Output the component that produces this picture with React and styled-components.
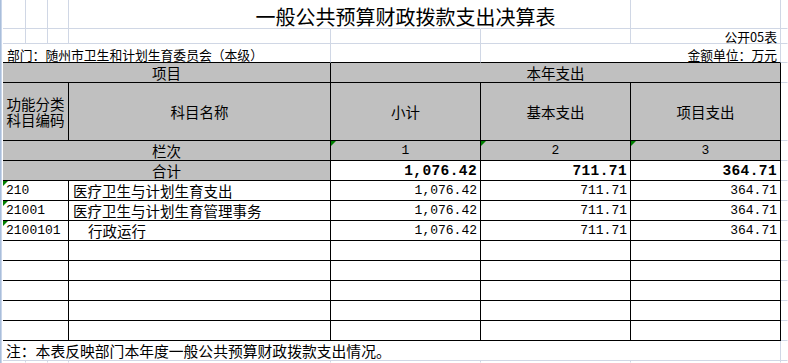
import React from 'react'
import styled, { createGlobalStyle, css } from 'styled-components'

const GRID = '#d0d7e5'

const line = (v) => (v === 'k' ? '#000' : v === 'g' ? GRID : 'transparent')

const Global = createGlobalStyle`
  html, body { margin: 0; padding: 0; background: #fff; }
  body { font-family: "Noto Sans CJK SC", sans-serif; color: #000; }
`

const Sheet = styled.div`
  display: grid;
  grid-template-columns: 3px 23px 22px 21px 262px 150px 150px 150px 1fr;
  grid-template-rows: 29px 15px 19px 20px 58px repeat(11, 20px) 1fr;
  width: 788px;
  height: 363px;
  overflow: hidden;
  background: #fff;
  font-family: "Noto Sans CJK SC", sans-serif;
  font-size: 14.5px;
  color: #000;
`

const Edge = styled.div`
  grid-column: 1;
  grid-row: 1 / -1;
  background: linear-gradient(to right, #a9bedb 0 1px, #c9d6ea 1px 2px, #fff 2px 3px);
`

const Cell = styled.div`
  position: relative;
  grid-column: span ${(p) => p.$span || 1};
  display: flex;
  align-items: center;
  justify-content: ${(p) =>
    p.$align === 'left' ? 'flex-start' : p.$align === 'right' ? 'flex-end' : 'center'};
  padding-left: ${(p) => (p.$align === 'left' ? `${p.$indent ?? 4}px` : '0')};
  padding-right: ${(p) => (p.$align === 'right' ? '3px' : '0')};
  padding-top: ${(p) => p.$top || 0}px;
  border-right: 1px solid ${(p) => line(p.$r)};
  border-bottom: 1px solid ${(p) => line(p.$b)};
  background: ${(p) => (p.$fill ? '#c0c0c0' : 'transparent')};
  white-space: nowrap;
  min-width: 0;
  line-height: ${(p) => p.$lh || 16}px;
  font-size: ${(p) => p.$size || 14.5}px;

  ${(p) =>
    p.$num &&
    css`
      font-family: "Liberation Mono", "Noto Sans CJK SC", monospace;
      font-size: ${p.$size || 13}px;
    `}

  ${(p) =>
    p.$bold &&
    css`
      font-weight: bold;
      font-size: 14.5px;
      letter-spacing: 0.4px;
    `}

  ${(p) =>
    p.$flag &&
    css`
      &::before {
        content: '';
        position: absolute;
        left: 0;
        top: 0;
        border-top: 5px solid #008000;
        border-right: 5px solid transparent;
      }
    `}
`

const Title = styled(Cell)`
  font-size: 20px;
  line-height: 22px;
  padding-top: 5px;
`

const Stack = styled.span`
  display: block;
  text-align: center;
  line-height: 16px;
`

const rows = [
  { code: '210', name: '医疗卫生与计划生育支出', indent: 4 },
  { code: '21001', name: '医疗卫生与计划生育管理事务', indent: 4 },
  { code: '2100101', name: '行政运行', indent: 19 },
]

const amounts = ['1,076.42', '711.71', '364.71']

export default function App() {
  return (
    <>
      <Global />
      <Sheet>
        <Edge />

        {/* title row */}
        <Cell $r="g" $b="g" />
        <Cell $r="g" $b="g" />
        <Cell $r="g" $b="g" />
        <Cell $b="g" />
        <Title $b="g">一般公共预算财政拨款支出决算表</Title>
        <Cell $r="g" $b="g" />
        <Cell $r="g" $b="g" />
        <Cell $b="g" />

        {/* form number */}
        <Cell $r="g" $b="g" />
        <Cell $r="g" $b="g" />
        <Cell $r="g" $b="g" />
        <Cell $r="g" $b="g" />
        <Cell $r="g" $b="g" />
        <Cell $r="g" $b="g" />
        <Cell $r="g" $b="g" $align="right" $size={12.8} $lh={13}>公开05表</Cell>
        <Cell $b="g" />

        {/* department / unit */}
        <Cell $span={4} $r="g" $b="k" $align="left" $size={12.8} $lh={14} $top={3}>
          部门：随州市卫生和计划生育委员会（本级）
        </Cell>
        <Cell $r="g" $b="k" />
        <Cell $span={2} $r="g" $b="k" $align="right" $size={12.8} $lh={14} $top={3}>
          金额单位：万元
        </Cell>
        <Cell $b="g" />

        {/* header 1 */}
        <Cell $span={4} $r="k" $b="k" $fill>项目</Cell>
        <Cell $span={3} $r="k" $b="k" $fill>本年支出</Cell>
        <Cell $b="g" />

        {/* header 2 */}
        <Cell $span={3} $r="k" $b="k" $fill>
          <Stack>功能分类<br />科目编码</Stack>
        </Cell>
        <Cell $r="k" $b="k" $fill>科目名称</Cell>
        <Cell $r="k" $b="k" $fill>小计</Cell>
        <Cell $r="k" $b="k" $fill>基本支出</Cell>
        <Cell $r="k" $b="k" $fill>项目支出</Cell>
        <Cell $b="g" />

        {/* column index */}
        <Cell $span={4} $r="k" $b="k" $fill>栏次</Cell>
        {['1', '2', '3'].map((n) => (
          <Cell key={n} $r="k" $b="k" $fill $flag $num>{n}</Cell>
        ))}
        <Cell $b="g" />

        {/* total */}
        <Cell $span={4} $r="k" $b="k" $fill>合计</Cell>
        {amounts.map((a) => (
          <Cell key={a} $r="k" $b="k" $align="right" $num $bold>{a}</Cell>
        ))}
        <Cell $b="g" />

        {rows.map((r) => (
          <React.Fragment key={r.code}>
            <Cell $span={3} $r="k" $b="k" $align="left" $indent={3} $flag $num>{r.code}</Cell>
            <Cell $r="k" $b="k" $align="left" $indent={r.indent}>{r.name}</Cell>
            {amounts.map((a) => (
              <Cell key={a} $r="k" $b="k" $align="right" $num>{a}</Cell>
            ))}
            <Cell $b="g" />
          </React.Fragment>
        ))}

        {[0, 1, 2, 3, 4].map((i) => (
          <React.Fragment key={i}>
            <Cell $span={3} $r="k" $b="k" />
            <Cell $r="k" $b="k" />
            <Cell $r="k" $b="k" />
            <Cell $r="k" $b="k" />
            <Cell $r="k" $b="k" />
            <Cell $b="g" />
          </React.Fragment>
        ))}

        {/* note */}
        <Cell $span={7} $r="g" $b="g" $align="left" $indent={3} $size={14.8}>
          注：本表反映部门本年度一般公共预算财政拨款支出情况。
        </Cell>
        <Cell $b="g" />

        {/* trailing row */}
        <Cell $r="g" />
        <Cell $r="g" />
        <Cell $r="g" />
        <Cell $r="g" />
        <Cell $r="g" />
        <Cell $r="g" />
        <Cell $r="g" />
        <Cell />
      </Sheet>
    </>
  )
}
